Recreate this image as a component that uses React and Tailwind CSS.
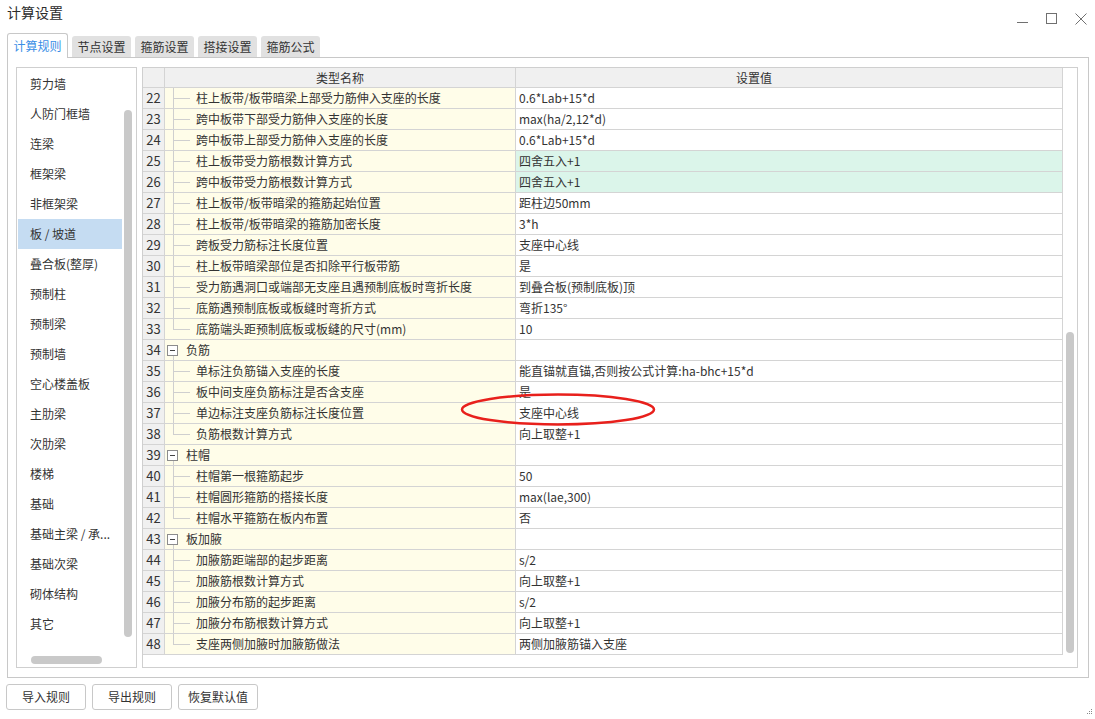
import React from 'react';

const TABS = ['计算规则', '节点设置', '箍筋设置', '搭接设置', '箍筋公式'];

const CATEGORIES = [
  '剪力墙', '人防门框墙', '连梁', '框架梁', '非框架梁', '板 / 坡道', '叠合板(整厚)', '预制柱',
  '预制梁', '预制墙', '空心楼盖板', '主肋梁', '次肋梁', '楼梯', '基础', '基础主梁 / 承...',
  '基础次梁', '砌体结构', '其它',
];

// kind: c = child, l = last child, g = group header
const ROWS = [
  { n: 22, kind: 'c', name: '柱上板带/板带暗梁上部受力筋伸入支座的长度', value: '0.6*Lab+15*d' },
  { n: 23, kind: 'c', name: '跨中板带下部受力筋伸入支座的长度', value: 'max(ha/2,12*d)' },
  { n: 24, kind: 'c', name: '跨中板带上部受力筋伸入支座的长度', value: '0.6*Lab+15*d' },
  { n: 25, kind: 'c', name: '柱上板带受力筋根数计算方式', value: '四舍五入+1', green: true },
  { n: 26, kind: 'c', name: '跨中板带受力筋根数计算方式', value: '四舍五入+1', green: true },
  { n: 27, kind: 'c', name: '柱上板带/板带暗梁的箍筋起始位置', value: '距柱边50mm' },
  { n: 28, kind: 'c', name: '柱上板带/板带暗梁的箍筋加密长度', value: '3*h' },
  { n: 29, kind: 'c', name: '跨板受力筋标注长度位置', value: '支座中心线' },
  { n: 30, kind: 'c', name: '柱上板带暗梁部位是否扣除平行板带筋', value: '是' },
  { n: 31, kind: 'c', name: '受力筋遇洞口或端部无支座且遇预制底板时弯折长度', value: '到叠合板(预制底板)顶' },
  { n: 32, kind: 'c', name: '底筋遇预制底板或板缝时弯折方式', value: '弯折135°' },
  { n: 33, kind: 'l', name: '底筋端头距预制底板或板缝的尺寸(mm)', value: '10' },
  { n: 34, kind: 'g', name: '负筋', value: '' },
  { n: 35, kind: 'c', name: '单标注负筋锚入支座的长度', value: '能直锚就直锚,否则按公式计算:ha-bhc+15*d' },
  { n: 36, kind: 'c', name: '板中间支座负筋标注是否含支座', value: '是' },
  { n: 37, kind: 'c', name: '单边标注支座负筋标注长度位置', value: '支座中心线' },
  { n: 38, kind: 'l', name: '负筋根数计算方式', value: '向上取整+1' },
  { n: 39, kind: 'g', name: '柱帽', value: '' },
  { n: 40, kind: 'c', name: '柱帽第一根箍筋起步', value: '50' },
  { n: 41, kind: 'c', name: '柱帽圆形箍筋的搭接长度', value: 'max(lae,300)' },
  { n: 42, kind: 'l', name: '柱帽水平箍筋在板内布置', value: '否' },
  { n: 43, kind: 'g', name: '板加腋', value: '' },
  { n: 44, kind: 'c', name: '加腋筋距端部的起步距离', value: 's/2' },
  { n: 45, kind: 'c', name: '加腋筋根数计算方式', value: '向上取整+1' },
  { n: 46, kind: 'c', name: '加腋分布筋的起步距离', value: 's/2' },
  { n: 47, kind: 'c', name: '加腋分布筋根数计算方式', value: '向上取整+1' },
  { n: 48, kind: 'l', name: '支座两侧加腋时加腋筋做法', value: '两侧加腋筋锚入支座' },
];

function TreeMark({ kind }) {
  if (kind === 'g') {
    return (
      <svg width="21" height="20" className="shrink-0">
        <rect x="2.5" y="5.5" width="10" height="10" fill="#fff" stroke="#8c8c8c" />
        <line x1="5" y1="10.5" x2="10" y2="10.5" stroke="#444" />
        <line x1="8.5" y1="16" x2="8.5" y2="21" stroke="#cfcfcf" />
      </svg>
    );
  }
  return (
    <svg width="31" height="20" className="shrink-0">
      <line x1="8.5" y1="-1" x2="8.5" y2={kind === 'l' ? 10.5 : 21} stroke="#cfcfcf" />
      <line x1="8" y1="10.5" x2="25" y2="10.5" stroke="#cfcfcf" />
    </svg>
  );
}

function WindowControls() {
  return (
    <div className="flex items-center gap-[17px] pt-[5px] pr-[8px]">
      <svg width="12" height="12"><line x1="0" y1="9.5" x2="11" y2="9.5" stroke="#707070" /></svg>
      <svg width="12" height="12"><rect x="0.5" y="0.5" width="10" height="10" fill="none" stroke="#707070" /></svg>
      <svg width="12" height="12"><path d="M0.5 0.5 L11.5 11.5 M11.5 0.5 L0.5 11.5" stroke="#707070" /></svg>
    </div>
  );
}

export default function App() {
  return (
    <div className="relative w-[1095px] h-[719px] bg-white overflow-hidden text-[#333] font-['Noto_Sans_CJK_SC',sans-serif]">
      {/* title bar */}
      <div className="h-[33px] flex justify-between">
        <div className="pl-[7px] pt-[2px] text-[14px] leading-[20px] text-[#2b2b2b]">计算设置</div>
        <WindowControls />
      </div>

      {/* tabs */}
      <div className="h-[24px] flex items-end gap-[4px] pl-[7px]">
        {TABS.map((t, i) =>
          i === 0 ? (
            <div key={t} className="relative z-10 -mb-px h-[25px] w-[61px] bg-white border border-b-0 border-[#c8c8c8] rounded-t-[3px] flex items-center justify-center text-[12px] text-[#3a8ee6]">
              {t}
            </div>
          ) : (
            <div key={t} className="h-[21px] w-[59px] bg-[#e1e1e1] rounded-t-[3px] flex items-center justify-center text-[12px] text-[#333]">
              {t}
            </div>
          )
        )}
      </div>

      {/* main panel */}
      <div className="ml-[7px] w-[1082px] h-[621px] border border-[#c8c8c8] flex pt-[9px] pl-[8px] pr-[10px] pb-[9px] gap-[5px]">
        {/* category list */}
        <div className="relative w-[121px] h-[601px] border border-[#cfcfcf] overflow-hidden">
          <div className="ml-[1px] mt-[1px] w-[104px] flex flex-col">
            {CATEGORIES.map((c, i) => (
              <div
                key={c}
                className={`h-[30px] shrink-0 flex items-center pl-[12px] text-[12px] whitespace-nowrap ${i === 5 ? 'bg-[#c5dcf2]' : ''}`}
              >
                {c}
              </div>
            ))}
          </div>
          <div className="absolute left-[107px] top-[42px] w-[8px] h-[527px] rounded-full bg-[#c9c9c9]" />
          <div className="absolute left-[14px] top-[588px] w-[71px] h-[8px] rounded-full bg-[#c9c9c9]" />
        </div>

        {/* settings table */}
        <div className="w-[936px] h-[601px] border border-[#cfcfcf] flex">
          <div className="w-[920px] flex flex-col text-[12px]">
            <div className="h-[20px] flex border-b border-[#d4d4d4] bg-[#f0f0f0]">
              <div className="w-[22px] border-r border-[#d4d4d4]" />
              <div className="w-[351px] border-r border-[#d4d4d4] flex items-center justify-center">类型名称</div>
              <div className="w-[547px] border-r border-[#d4d4d4] flex items-center justify-center pr-[70px]">设置值</div>
            </div>
            {ROWS.map((r) => (
              <div key={r.n} className="h-[21px] flex border-b border-[#d4d4d4] leading-[20px]">
                <div className="w-[22px] border-r border-[#d4d4d4] bg-[#f0f0f0] text-[13px] text-center">{r.n}</div>
                <div className="w-[351px] border-r border-[#d4d4d4] bg-[#fffde9] flex items-center whitespace-nowrap overflow-hidden">
                  <TreeMark kind={r.kind} />
                  <span>{r.name}</span>
                </div>
                <div className={`w-[547px] border-r border-[#d4d4d4] pl-[3px] whitespace-nowrap ${r.green ? 'bg-[#dbf5ea]' : 'bg-white'}`}>
                  {r.value}
                </div>
              </div>
            ))}
          </div>
          <div className="w-[14px] flex flex-col">
            <div className="ml-[3px] mt-[264px] w-[8px] h-[321px] rounded-full bg-[#c9c9c9]" />
          </div>
        </div>
      </div>

      {/* bottom buttons */}
      <div className="mt-[6px] ml-[6px] flex gap-[6px]">
        {['导入规则', '导出规则', '恢复默认值'].map((b) => (
          <div key={b} className="w-[80px] h-[26px] border border-[#c8c8c8] rounded-[3px] bg-white flex items-center justify-center text-[12px] text-[#333]">
            {b}
          </div>
        ))}
      </div>

      {/* red annotation ellipse */}
      <svg className="absolute left-[460px] top-[392px]" width="200" height="36">
        <ellipse cx="98" cy="17.5" rx="96" ry="15" fill="none" stroke="#e8201c" strokeWidth="2.5" />
      </svg>

      {/* resize grip */}
      <svg className="absolute right-[2px] bottom-[3px]" width="7" height="7">
        <rect x="5" y="0" width="1" height="1" fill="#8a8a8a" />
        <rect x="3" y="2" width="1" height="1" fill="#8a8a8a" />
        <rect x="5" y="2" width="1" height="1" fill="#8a8a8a" />
        <rect x="1" y="4" width="1" height="1" fill="#8a8a8a" />
        <rect x="3" y="4" width="1" height="1" fill="#8a8a8a" />
        <rect x="5" y="4" width="1" height="1" fill="#8a8a8a" />
      </svg>
    </div>
  );
}
